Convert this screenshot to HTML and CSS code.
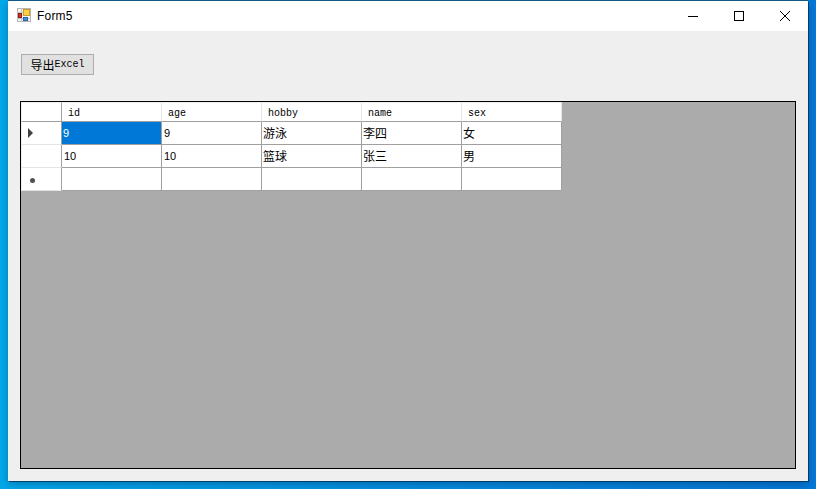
FILE: index.html
```html
<!DOCTYPE html>
<html lang="zh">
<head>
<meta charset="utf-8">
<title>Form5</title>
<link rel="stylesheet" href="styles.css">
</head>
<body>
<div class="window">
  <header class="titlebar">
    <svg class="appicon" width="16" height="16" viewBox="0 0 16 16">
      <rect x="0.5" y="0.5" width="13" height="13" fill="#f4f4f4" stroke="#b4b4b4"/>
      <path d="M0 4.5h6M0 10.5h14M4.5 0v14M9.5 9v5" stroke="#c4c4c4" fill="none"/>
      <rect x="6.5" y="1.5" width="6" height="6" fill="#f8d04c" stroke="#d09c1c"/>
      <rect x="1.5" y="5.5" width="3" height="4" fill="#d8322a" stroke="#8e1d18"/>
      <rect x="6.5" y="9.5" width="4" height="3" fill="#4a8ee0" stroke="#2a62a8"/>
    </svg>
    <span class="title">Form5</span>
    <div class="controls">
      <svg class="ctl" width="46" height="30" viewBox="0 0 46 30"><rect x="18" y="15" width="10" height="1" fill="#000"/></svg>
      <svg class="ctl" width="46" height="30" viewBox="0 0 46 30"><rect x="18.5" y="10.5" width="9" height="9" fill="none" stroke="#000"/></svg>
      <svg class="ctl" width="46" height="30" viewBox="0 0 46 30"><path d="M18 10l10 10M28 10L18 20" fill="none" stroke="#000" stroke-width="1"/></svg>
    </div>
  </header>
  <main class="client">
    <button class="btn" type="button"><span class="cjk">导出</span>Excel</button>
    <section class="gridview">
      <table class="dgv">
        <thead>
          <tr class="head">
            <th class="rh"></th><th>id</th><th>age</th><th>hobby</th><th>name</th><th>sex</th>
          </tr>
        </thead>
        <tbody>
          <tr>
            <th class="rh"><span class="arrow"></span></th>
            <td class="sel">9</td><td>9</td><td class="cjk">游泳</td><td class="cjk">李四</td><td class="cjk">女</td>
          </tr>
          <tr>
            <th class="rh"></th>
            <td>10</td><td>10</td><td class="cjk">篮球</td><td class="cjk">张三</td><td class="cjk">男</td>
          </tr>
          <tr>
            <th class="rh"><span class="star"></span></th>
            <td></td><td></td><td></td><td></td><td></td>
          </tr>
        </tbody>
      </table>
    </section>
  </main>
</div>
</body>
</html>
```
FILE: styles.css
```css
* { box-sizing: border-box; }
html, body { margin: 0; height: 100%; }
body {
  width: 816px;
  height: 489px;
  overflow: hidden;
  padding: 1px 8px 8px;
  background: linear-gradient(90deg, #03a9ea 0%, #0590e0 45%, #0578d8 100%);
  font-family: "Liberation Mono", "Noto Sans CJK SC", monospace;
}
.window {
  height: 480px;
  background: #efefef;
  display: flex;
  flex-direction: column;
  box-shadow: 0 -1px 0 #0f5a85, 1px 1px 0 rgba(0, 40, 70, 0.7), 0 3px 8px rgba(0, 30, 70, 0.35);
}
.titlebar {
  height: 30px;
  flex: none;
  background: #fff;
  display: flex;
  align-items: center;
  padding-left: 9px;
}
.appicon { flex: none; margin-top: -1px; }
.title {
  margin-left: 4px;
  font: 12px/16px "Liberation Sans", sans-serif;
  color: #000;
  letter-spacing: 0.2px;
}
.controls { margin-left: auto; display: flex; }
.ctl { display: block; }
.client {
  flex: 1;
  display: flex;
  flex-direction: column;
  align-items: flex-start;
  padding: 23px 12px 12px 12px;
}
.btn {
  width: 73px;
  height: 21px;
  margin-left: 1px;
  padding: 0;
  background: #e1e1e1;
  border: 1px solid #adadad;
  border-radius: 0;
  font: 10px/19px "Liberation Mono", monospace;
  color: #000;
  white-space: nowrap;
}
.btn .cjk { font: 12px/19px "Noto Sans CJK SC", sans-serif; vertical-align: top; }
.gridview {
  margin-top: 26px;
  width: 776px;
  height: 368px;
  background: #ababab;
  border: 1px solid #000;
}
.dgv {
  border-collapse: separate;
  border-spacing: 0;
  table-layout: fixed;
  width: 541px;
  height: 89px;
}
.dgv th, .dgv td { padding: 0; font-weight: normal; }
.head th {
  width: 100px;
  height: 20px;
  background: #fff;
  color: #000;
  font-size: 10px;
  line-height: 14px;
  text-align: left;
  padding: 4px 0 0 6px;
  border-top: 1px solid #efefef;
  border-right: 1px solid #e4e4e4;
  border-bottom: 1px solid #a0a0a0;
}
.dgv .head .rh { width: 41px; padding: 0; border-left: 1px solid #efefef; border-right-color: #a0a0a0; }
.dgv td {
  width: 100px;
  height: 23px;
  background: #fff;
  border-right: 1px solid #a0a0a0;
  border-bottom: 1px solid #a0a0a0;
  font: 11px/22px "Liberation Sans", sans-serif;
  padding-left: 2px;
  color: #000;
  vertical-align: middle;
}
.dgv td.cjk {
  font: 12px/22px "Noto Sans CJK SC", sans-serif;
  padding-left: 1px;
}
.dgv td.sel { background: #0078d7; color: #fff; padding-left: 1px; }
tbody .rh {
  height: 23px;
  background: #fff;
  border-left: 1px solid #efefef;
  border-right: 1px solid #a0a0a0;
  border-bottom: 1px solid #e4e4e4;
  text-align: left;
  padding-left: 6px;
}
.arrow {
  display: block;
  width: 0;
  height: 0;
  border-left: 5px solid #404040;
  border-top: 5px solid transparent;
  border-bottom: 5px solid transparent;
}
.star {
  display: block;
  width: 5px;
  height: 5px;
  margin-top: 2px;
  margin-left: 2px;
  border-radius: 50%;
  background: #505050;
}
```
